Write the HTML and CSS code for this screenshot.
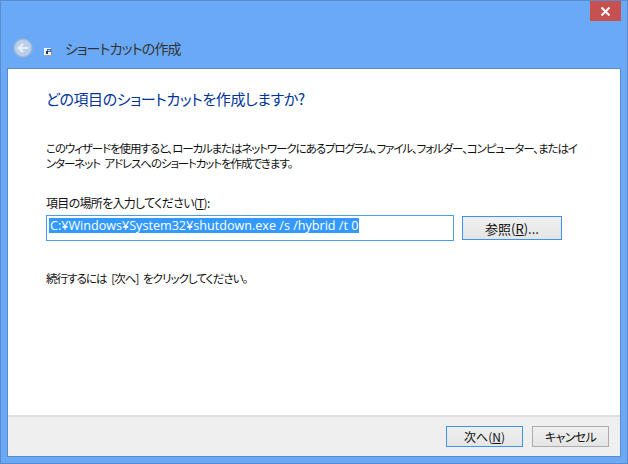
FILE: index.html
```html
<!DOCTYPE html>
<html lang="ja">
<head>
<meta charset="utf-8">
<title>ショートカットの作成</title>
<link rel="stylesheet" href="styles.css">
</head>
<body>
<div class="window">
  <div class="chrome">
    <div class="caption"><button class="close" aria-label="閉じる"><svg width="11" height="9" viewBox="0 0 11 9"><path d="M1.5 .5 9.5 8.5M9.5 .5 1.5 8.5" stroke="#fff" stroke-width="2" fill="none"/></svg></button></div>
    <div class="nav">
      <svg class="back" width="20" height="20" viewBox="0 0 20 20"><circle cx="10" cy="10" r="9" fill="#b9cfeb" stroke="#9db4d6" stroke-width="1.4"/><path d="M15 10H6M10 5.8 5.8 10 10 14.2" stroke="#e8eff9" stroke-width="2.2" fill="none"/></svg>
      <svg class="appicon" width="8" height="8" viewBox="0 0 8 8" shape-rendering="crispEdges"><rect width="8" height="8" fill="#f4f6f9"/><rect x="7" width="1" height="8" fill="#8d8d8d"/><rect y="7" width="8" height="1" fill="#a0a0a0"/><rect x="3" y="1" width="4" height="3" fill="#2a6cc4"/><rect x="2" y="3" width="2" height="3" fill="#123a7c"/><rect x="4" y="2" width="2" height="1" fill="#cfe0f5"/></svg>
      <span class="wintitle">ショートカットの作成</span>
    </div>
  </div>
  <div class="panel">
    <main class="main">
      <h1 class="heading">どの項目のショートカットを作成しますか?</h1>
      <p class="desc">このウィザードを使用すると、ローカルまたはネットワークにあるプログラム、ファイル、フォルダー、コンピューター、またはイ<br>ンターネット アドレスへのショートカットを作成できます。</p>
      <label class="label" for="loc">項目の場所を入力してください(<u>T</u>):</label>
      <div class="row">
        <div class="field" id="loc"><span class="sel">C:¥Windows¥System32¥shutdown.exe /s /hybrid /t 0</span></div>
        <button class="btn btn-focus browse">参照(<u>R</u>)...</button>
      </div>
      <p class="hint">続行するには [次へ] をクリックしてください。</p>
    </main>
    <footer class="footer">
      <button class="btn btn-focus action">次へ(<u>N</u>)</button>
      <button class="btn btn-plain action tight">キャンセル</button>
    </footer>
  </div>
</div>
</body>
</html>
```
FILE: styles.css
```css
* { box-sizing: border-box; }
html, body { margin: 0; padding: 0; }
body {
  width: 628px; height: 464px; overflow: hidden;
  font-family: "Noto Sans CJK JP", "Noto Sans", sans-serif;
  font-feature-settings: "palt";
  font-size: 12px; color: #111;
}
.window {
  width: 628px; height: 464px;
  background: #6aa9f5;
  border: 1px solid #5a8ccb;
  display: flex; flex-direction: column;
  padding: 0 7px 7px;
}
.chrome { height: 68px; flex: none; display: flex; flex-direction: column; }
.caption { display: flex; justify-content: flex-end; margin-right: -1px; }
.close {
  width: 31px; height: 20px; border: 0; padding: 0;
  background: #c75050; display: flex; align-items: center; justify-content: center;
}
.nav { display: flex; align-items: center; margin-top: 17px; height: 20px; margin-left: 5px; }
.back { flex: none; }
.appicon { margin: 7px 0 0 11px; flex: none; }
.wintitle { margin-left: 13px; font-size: 14px; color: #333; font-weight: 400; letter-spacing: -.85px; line-height: 20px; }
.panel {
  flex: 1; display: flex; flex-direction: column;
  background: #fff;
  outline: 1px solid #5a8ccb;
}
.main { flex: 1; padding: 18px 38px 0; display: flex; flex-direction: column; }
.heading { margin: 0; font-size: 15px; font-weight: 400; color: #003399; line-height: 24px; letter-spacing: -.42px; white-space: nowrap; }
.desc { margin: 30px 0 0; line-height: 15px; font-size: 11.5px; letter-spacing: -1.1px; word-spacing: 3px; white-space: nowrap; }
.label { margin-top: 24px; line-height: 16px; letter-spacing: -.7px; }
.row { display: flex; margin-top: 4px; gap: 8px; align-items: center; }
.field {
  width: 408px; height: 26px; border: 1px solid #4a9cf0; background: #fff;
  padding: 2px 2px 7px; display: flex; align-items: stretch;
}
.sel {
  background: #3399ff; color: #fff; display: flex; align-items: center;
  font-family: "Open Sans", "Noto Sans CJK JP", sans-serif; font-size: 12.6px; white-space: nowrap; padding: 0 1px;
}
.btn {
  font: inherit; color: #111; height: 24px; padding: 0;
  background: linear-gradient(#f0f0f0, #e5e5e5);
}
.btn-focus { border: 1px solid #3c94f0; }
.btn-plain { border: 1px solid #acacac; }
.browse { width: 100px; font-size: 13px; }
.hint { margin: 29px 0 0; line-height: 16px; font-size: 11.5px; letter-spacing: -.95px; word-spacing: 3px; }
.footer {
  height: 41px; flex: none; background: #efefef; border-top: 2px solid #dfdfdf;
  display: flex; justify-content: flex-end; align-items: flex-start;
  gap: 9px; padding: 9px 11px 0 0;
}
.action { width: 77px; height: 21px; line-height: 18px; }
.tight { letter-spacing: -.6px; }
```
